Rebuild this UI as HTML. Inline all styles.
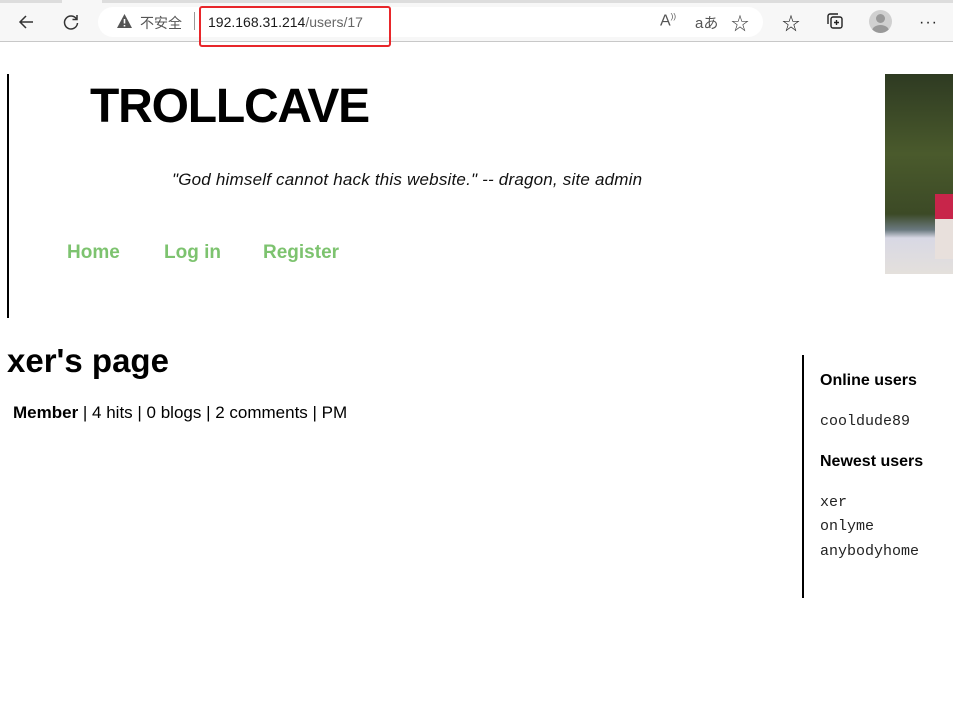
<!DOCTYPE html>
<html><head><meta charset="utf-8"><style>
*{margin:0;padding:0;box-sizing:border-box}
body{width:953px;height:725px;overflow:hidden;background:#fff;font-family:"Liberation Sans","Noto Sans CJK SC",sans-serif;position:relative;color:#000}
.bar{position:absolute;left:0;top:0;width:953px;height:42px;background:#f7f7f7;border-bottom:1px solid #c8c8c8}
.tabline{position:absolute;top:0;left:0;width:953px;height:3px;background:#ddd}
.tabline i{position:absolute;left:62px;width:40px;top:0;height:3px;background:#f7f7f7}
.url{position:absolute;left:98px;top:7px;width:665px;height:30px;border-radius:15px;background:#fff}
.abs{position:absolute}
.red{position:absolute;left:199px;top:6px;width:192px;height:41px;border:2px solid #e8262a;border-radius:3px}
.nav a{position:absolute;top:242px;color:#7dc36f;font-weight:bold;font-size:19px;text-decoration:none}
.mono{font-family:"Liberation Mono",monospace;font-size:15px;color:#222;position:absolute;left:820px}
</style></head><body>
<div class="bar"><div class="tabline"><i></i></div>
<svg class="abs" style="left:16px;top:12px" width="20" height="20" viewBox="0 0 20 20"><path d="M17 10H4M10 4L4 10l6 6" fill="none" stroke="#333" stroke-width="1.5"/></svg>
<svg class="abs" style="left:61px;top:12px" width="20" height="20" viewBox="0 0 20 20"><path d="M15.5 7A6.5 6.5 0 1 0 16.5 11M16 3v4.5h-4.5" fill="none" stroke="#333" stroke-width="1.5"/></svg>
<div class="url"></div>
<svg class="abs" style="left:116px;top:13px" width="17" height="16" viewBox="0 0 17 16"><path d="M8.5 1L16 15H1z" fill="#555"/><path d="M8.5 6v4.5M8.5 12v1.5" stroke="#fff" stroke-width="1.6"/></svg>
<div class="abs" style="left:140px;top:13px;font-size:14px;color:#555">不安全</div>
<div class="abs" style="left:194px;top:12px;width:1px;height:18px;background:#999"></div>
<div class="abs" style="left:208px;top:14px;font-size:14px;color:#1a1a1a">192.168.31.214<span style="color:#666">/users/17</span></div>
<div class="abs" style="left:660px;top:12px;font-size:16px;color:#555">A<sup style="font-size:8px">))</sup></div>
<div class="abs" style="left:695px;top:12px;font-size:15px;color:#555">aあ</div>
<div class="abs" style="left:731px;top:10px;font-size:18px;color:#444">☆</div>
<div class="abs" style="left:782px;top:10px;font-size:18px;color:#222">☆</div>
<svg class="abs" style="left:826px;top:12px" width="18" height="18" viewBox="0 0 18 18"><rect x="5" y="5" width="11" height="11" rx="2" fill="none" stroke="#222" stroke-width="1.4"/><path d="M2 12V4a2 2 0 0 1 2-2h8M10.5 8v5M8 10.5h5" fill="none" stroke="#222" stroke-width="1.4"/></svg>
<div class="abs" style="left:869px;top:10px;width:23px;height:23px;border-radius:50%;background:#d0d0d0;overflow:hidden"><div class="abs" style="left:7px;top:4px;width:9px;height:9px;border-radius:50%;background:#999"></div><div class="abs" style="left:3px;top:15px;width:17px;height:12px;border-radius:50%;background:#999"></div></div>
<div class="abs" style="left:919px;top:14px;font-size:16px;color:#222;letter-spacing:1px">···</div>
</div>
<div class="red"></div>
<div class="abs" style="left:7px;top:74px;width:2px;height:244px;background:#000"></div>
<div class="abs" style="left:90px;top:79px;font-size:48px;font-weight:bold;letter-spacing:-1.2px">TROLLCAVE</div>
<div class="abs" style="left:172px;top:170px;font-size:17px;font-style:italic;color:#111;letter-spacing:0.2px">"God himself cannot hack this website." -- dragon, site admin</div>
<div class="nav"><a style="left:67px">Home</a><a style="left:164px">Log in</a><a style="left:263px">Register</a></div>
<div class="abs" style="left:885px;top:74px;width:68px;height:200px;background:linear-gradient(180deg,#2e3a22 0%,#4a5a2c 40%,#3c4a26 70%,#6b7a80 78%,#d8d8e4 82%,#e4e0dc 100%)"><div class="abs" style="left:50px;top:120px;width:18px;height:32px;background:#c8254a"></div><div class="abs" style="left:50px;top:145px;width:18px;height:40px;background:#e8e0dc"></div></div>
<div class="abs" style="left:7px;top:342px;font-size:33px;font-weight:bold">xer's page</div>
<div class="abs" style="left:13px;top:403px;font-size:17px"><b>Member</b> | 4 hits | 0 blogs | 2 comments | PM</div>
<div class="abs" style="left:802px;top:355px;width:2px;height:243px;background:#000"></div>
<div class="abs" style="left:820px;top:372px;font-size:16px;font-weight:bold">Online users</div>
<div class="mono" style="top:413px">cooldude89</div>
<div class="abs" style="left:820px;top:453px;font-size:16px;font-weight:bold">Newest users</div>
<div class="mono" style="top:494px">xer</div>
<div class="mono" style="top:518px">onlyme</div>
<div class="mono" style="top:543px">anybodyhome</div>
</body></html>
